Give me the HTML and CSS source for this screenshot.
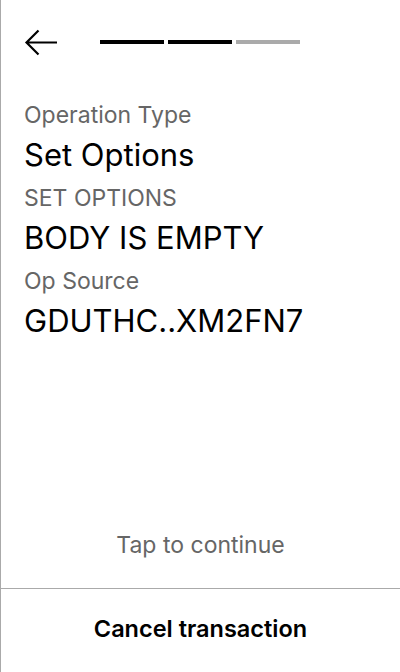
FILE: index.html
```html
<!DOCTYPE html>
<html>
<head>
<meta charset="utf-8">
<link rel="stylesheet" href="styles.css">
</head>
<body>
<div class="screen">
  <header class="header">
    <svg class="back" width="34" height="30" viewBox="0 0 34 30">
      <path d="M33 13.5H3M14.5 1.5L2.5 13.5L14.5 25.5" fill="none" stroke="#000" stroke-width="2.2"/>
    </svg>
    <div class="steps">
      <span class="step done"></span>
      <span class="step done"></span>
      <span class="step"></span>
    </div>
  </header>
  <main class="content">
    <div class="field">
      <div class="label">Operation Type</div>
      <div class="value">Set Options</div>
    </div>
    <div class="field">
      <div class="label">SET OPTIONS</div>
      <div class="value">BODY IS EMPTY</div>
    </div>
    <div class="field">
      <div class="label">Op Source</div>
      <div class="value">GDUTHC..XM2FN7</div>
    </div>
  </main>
  <div class="tap">Tap to continue</div>
  <div class="cancel">Cancel transaction</div>
</div>
</body>
</html>
```
FILE: styles.css
```css
html, body {
  margin: 0;
  padding: 0;
  background: #fff;
}
.screen {
  height: 672px;
  box-sizing: border-box;
  border-left: 1px solid #aaa;
  display: flex;
  flex-direction: column;
  font-family: Inter, "Noto Sans", sans-serif;
  color: #000;
}
.header {
  display: flex;
  align-items: flex-start;
  padding: 29px 0 0 23px;
  height: 70px;
  box-sizing: border-box;
}
.back {
  display: block;
}
.steps {
  display: flex;
  gap: 4px;
  margin: 11px 0 0 42px;
}
.step {
  width: 64px;
  height: 4px;
  background: #aaa;
}
.step.done {
  background: #000;
}
.content {
  flex: 1;
  padding: 29px 0 0 23px;
  display: flex;
  flex-direction: column;
  gap: 6px;
}
.label {
  font-size: 23px;
  line-height: 32px;
  color: #666;
}
.value {
  font-size: 31px;
  line-height: 42px;
  padding-top: 3px;
}
.tap {
  text-align: center;
  font-size: 23px;
  line-height: 32px;
  color: #666;
  padding-bottom: 27px;
}
.cancel {
  border-top: 1px solid #aaa;
  height: 84px;
  display: flex;
  align-items: center;
  justify-content: center;
  font-size: 23.5px;
  font-weight: 600;
  padding-bottom: 4px;
  box-sizing: border-box;
}
```
